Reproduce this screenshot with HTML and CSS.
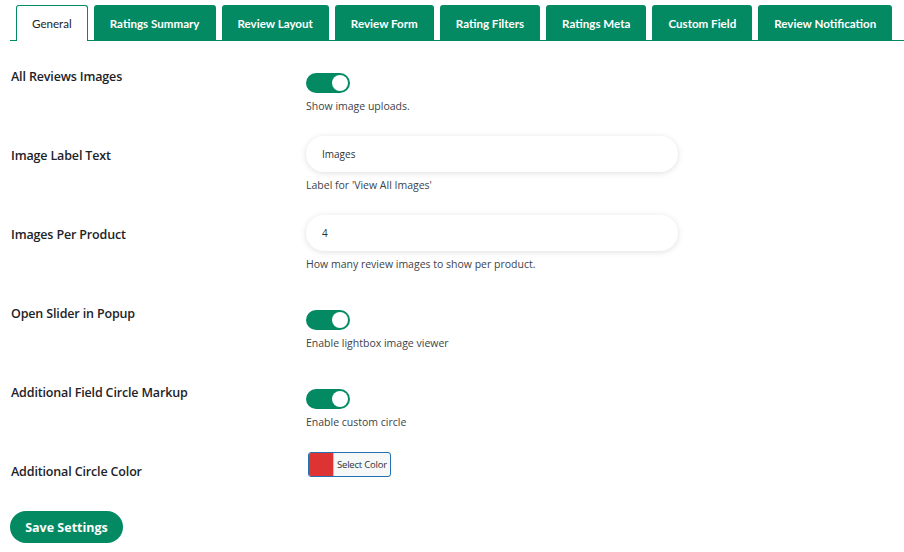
FILE: index.html
```html
<!DOCTYPE html>
<html>
<head>
<meta charset="utf-8">
<link rel="stylesheet" href="styles.css">
</head>
<body>
<nav class="tabs">
  <a class="tab active">General</a>
  <a class="tab">Ratings Summary</a>
  <a class="tab">Review Layout</a>
  <a class="tab">Review Form</a>
  <a class="tab">Rating Filters</a>
  <a class="tab">Ratings Meta</a>
  <a class="tab">Custom Field</a>
  <a class="tab">Review Notification</a>
</nav>
<form class="settings">
  <div class="row">
    <div class="label">All Reviews Images</div>
    <div class="control">
      <span class="toggle"><span class="knob"></span></span>
      <p class="desc">Show image uploads.</p>
    </div>
  </div>
  <div class="row">
    <div class="label">Image Label Text</div>
    <div class="control">
      <div class="input">Images</div>
      <p class="desc">Label for 'View All Images'</p>
    </div>
  </div>
  <div class="row">
    <div class="label">Images Per Product</div>
    <div class="control">
      <div class="input">4</div>
      <p class="desc">How many review images to show per product.</p>
    </div>
  </div>
  <div class="row">
    <div class="label">Open Slider in Popup</div>
    <div class="control">
      <span class="toggle"><span class="knob"></span></span>
      <p class="desc">Enable lightbox image viewer</p>
    </div>
  </div>
  <div class="row">
    <div class="label">Additional Field Circle Markup</div>
    <div class="control">
      <span class="toggle"><span class="knob"></span></span>
      <p class="desc">Enable custom circle</p>
    </div>
  </div>
  <div class="row">
    <div class="label">Additional Circle Color</div>
    <div class="control">
      <span class="color-btn"><span class="swatch"></span><span class="color-text">Select Color</span></span>
    </div>
  </div>
  <button type="button" class="save">Save Settings</button>
</form>
</body>
</html>
```
FILE: styles.css
```css
* { box-sizing: border-box; }
body {
  margin: 0;
  background: #fff;
  font-family: "Open Sans", "Noto Sans", sans-serif;
  color: #1d2327;
}
.tabs {
  display: flex;
  margin-left: 10px;
  padding: 5px 0 0 6px;
  border-bottom: 1px solid #038a63;
  height: 41px;
}
.tab {
  display: block;
  flex: none;
  height: 35px;
  line-height: 37px;
  padding: 0 16px;
  margin-right: 6px;
  background: #038a63;
  color: #fff;
  font-family: Lato, "Open Sans", sans-serif;
  font-size: 11.6px;
  font-weight: 700;
  border-radius: 3px 3px 0 0;
  white-space: nowrap;
}
.tab.active {
  background: #fff;
  color: #1d2327;
  font-weight: 400;
  border: 1px solid #038a63;
  border-bottom: none;
  height: 36px;
  line-height: 36px;
  padding: 0 15px;
}
.settings {
  padding: 5px 0 0 11px;
}
.row {
  display: flex;
  align-items: flex-start;
  padding: 11px 0;
}
.label {
  width: 295px;
  flex: none;
  padding-top: 10px;
  font-size: 12.5px;
  line-height: 19px;
  font-weight: 600;
  color: #1d2327;
  letter-spacing: -0.15px;
}
.control {
  display: flex;
  flex-direction: column;
  align-items: flex-start;
}
.toggle {
  position: relative;
  display: block;
  width: 44px;
  height: 20px;
  margin-top: 16px;
  border-radius: 10px;
  background: #038a63;
}
.knob {
  position: absolute;
  right: 2px;
  top: 2px;
  width: 16px;
  height: 16px;
  border-radius: 50%;
  background: #fff;
}
.desc {
  margin: 6px 0 0;
  font-size: 10.5px;
  line-height: 15px;
  color: #3c434a;
}
.input {
  width: 372px;
  height: 36px;
  border-radius: 18px;
  background: #fff;
  box-shadow: 0 1px 6px rgba(0, 0, 0, 0.13);
  padding: 0 16px;
  font-size: 10px;
  line-height: 36px;
  color: #2c3338;
}
.color-btn {
  display: flex;
  margin-left: 2px;
  width: 83px;
  height: 25px;
  border: 1px solid #2271b1;
  border-radius: 3px;
  background: #f6f7f7;
  overflow: hidden;
}
.swatch {
  width: 25px;
  background: #dd3333;
  border-right: 1px solid #c3c4c7;
}
.color-text {
  flex: 1;
  text-align: center;
  font-size: 9.5px;
  line-height: 23px;
  color: #2c3338;
  letter-spacing: -0.2px;
}
.save {
  display: block;
  margin: 19px 0 0 -1px;
  width: 113px;
  height: 32px;
  border: none;
  border-radius: 16px;
  background: #038a63;
  color: #fff;
  font-family: "Open Sans", "Noto Sans", sans-serif;
  font-size: 12.5px;
  font-weight: 700;
  padding: 0;
}
```
